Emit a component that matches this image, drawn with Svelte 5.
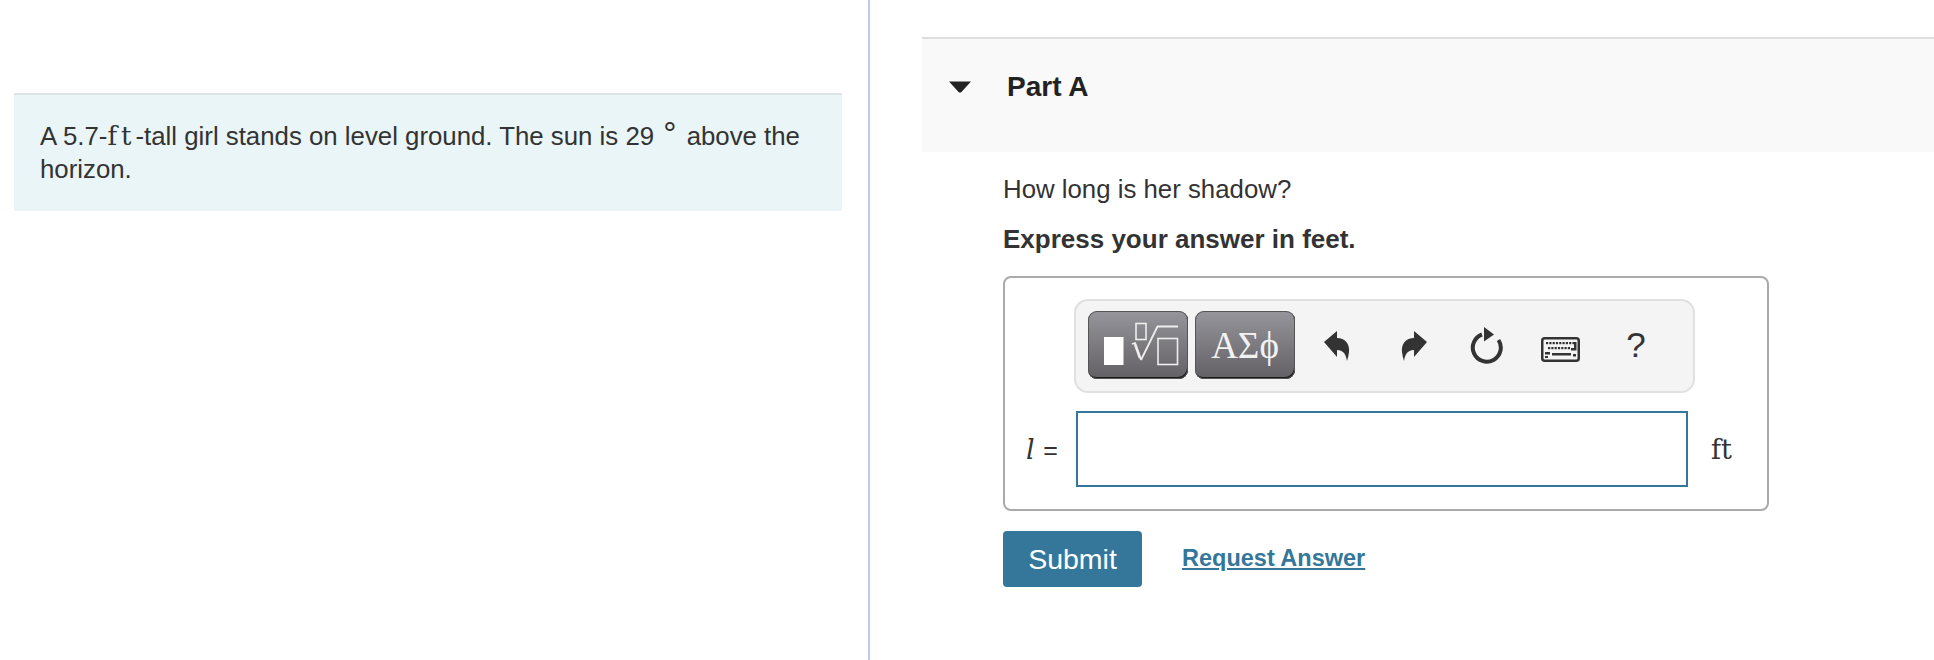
<script>
	const keys = [0, 1, 2, 3, 4, 5, 6, 7, 8];
</script>

<div class="page">
	<section class="left">
		<div class="intro">
			<p>A 5.7-<span class="unit">ft</span>-tall girl stands on level ground. The sun is 29 <span class="deg">°</span> above the horizon.</p>
		</div>
	</section>

	<section class="right">
		<header class="part-head">
			<svg class="caret" viewBox="0 0 22 12" width="22" height="12"><path d="M0 0.5h22L12 11.5h-2z" fill="#222" /></svg>
			<h2>Part A</h2>
		</header>

		<div class="body">
			<p class="question">How long is her shadow?</p>
			<p class="instr">Express your answer in feet.</p>

			<div class="answer-box">
				<div class="toolbar">
					<button class="tpl" aria-label="templates">
						<svg viewBox="0 0 100 68" width="100" height="68" fill="none" stroke="#eee" stroke-width="1.6">
							<rect x="16" y="26" width="19.500" height="28" fill="#fff" stroke="none" />
							<rect x="48" y="12.500" width="10" height="16" />
							<path d="M44 33l3-1 6 17" />
							<path d="M53 49L69.500 15.500H90" stroke-width="1.800" />
							<path d="M52 47l-5-14" stroke-width="2.600" />
							<rect x="70" y="27.500" width="19.500" height="26" />
						</svg>
					</button>
					<button class="tpl greek">ΑΣϕ</button>

					<span class="tool undo">
						<svg viewBox="0 0 28 32" width="28" height="32"><path d="M1 12L14 1v7c8 0 13 6 12 14-.3 3-1 6-2 9-1-6-3-11-10-11v7z" fill="#333" /></svg>
					</span>
					<span class="tool redo">
						<svg viewBox="0 0 28 32" width="28" height="32"><path d="M27 12L14 1v7C6 8 1 14 2 22c.3 3 1 6 2 9 1-6 3-11 10-11v7z" fill="#333" /></svg>
					</span>
					<span class="tool reload">
						<svg viewBox="0 0 34 38" width="34" height="38" fill="none"><path d="M13 8.500A14 14 0 1 0 29.500 14" stroke="#333" stroke-width="4" /><path d="M15 1l10 7.500-10 7z" fill="#333" /></svg>
					</span>
					<span class="tool kbd">
						<svg viewBox="0 0 39 25" width="39" height="25" fill="none">
							<rect x="1.250" y="1.250" width="36.500" height="22.500" rx="2.500" stroke="#333" stroke-width="2.500" />
							{#each keys as k}
								<rect x={5 + k * 3.3} y="5" width="2.200" height="2.200" fill="#333" />
							{/each}
							{#each keys.slice(0, 7) as k}
								<rect x={7 + k * 3.3} y="10" width="2.200" height="2.200" fill="#333" />
							{/each}
							<path d="M33 5h2.500v8.500H30v-2.500h3z" fill="#333" />
							<rect x="4" y="15" width="5" height="2.500" fill="#333" />
							<rect x="11" y="16" width="19" height="2.500" fill="#333" />
							<rect x="4" y="19" width="3" height="2" fill="#333" />
							<rect x="32" y="17" width="3" height="2.500" fill="#333" />
						</svg>
					</span>
					<span class="tool help">?</span>
				</div>

				<div class="entry">
					<span class="lhs"><i>l</i> <span class="eq">=</span></span>
					<input type="text" aria-label="answer" />
					<span class="unit-after">ft</span>
				</div>
			</div>

			<div class="actions">
				<button class="submit">Submit</button>
				<a class="request" href="#answer">Request Answer</a>
			</div>
		</div>
	</section>
</div>

<style>
	:global(body) {
		margin: 0;
		background: #fff;
		font-family: "Liberation Sans", Arial, sans-serif;
		color: #333;
	}

	.page {
		display: flex;
		height: 660px;
		overflow: hidden;
	}

	.left {
		box-sizing: border-box;
		width: 870px;
		flex: none;
		padding: 93px 26px 0 14px;
		border-right: 2px solid #b9cbe6;
	}

	.intro {
		box-sizing: border-box;
		height: 118px;
		padding: 25px 26px 0;
		background: #e9f5f7;
		border-top: 2px solid #dfe3e3;
	}

	.intro p {
		margin: 0;
		font-size: 25.8px;
		line-height: 33px;
	}

	.unit {
		font-family: "DejaVu Serif", serif;
		font-size: 26px;
		letter-spacing: 4px;
		line-height: 0;
	}

	.deg {
		font-size: 33px;
		position: relative;
		top: 0;
		margin: 0 3px 0 2px;
		line-height: 0;
	}

	.right {
		flex: 1;
		padding: 37px 0 0 52px;
		min-width: 0;
	}

	.part-head {
		display: flex;
		align-items: flex-start;
		box-sizing: border-box;
		height: 115px;
		padding: 33px 0 0 27px;
		background: #f9f9f9;
		border-top: 2px solid #dedede;
	}

	.caret {
		margin-top: 9px;
	}

	.part-head h2 {
		margin: 0 0 0 36px;
		font-size: 28px;
		line-height: 29px;
		font-weight: 700;
		color: #222;
	}

	.body {
		padding: 21px 0 0 81px;
	}

	.question,
	.instr {
		margin: 0;
		font-size: 25.8px;
		line-height: 33px;
	}

	.instr {
		margin-top: 17px;
		font-size: 26px;
		font-weight: 700;
	}

	.answer-box {
		box-sizing: border-box;
		width: 766px;
		height: 235px;
		margin-top: 20px;
		padding: 21px 0 0 69px;
		border: 2px solid #aaa;
		border-radius: 8px;
	}

	.toolbar {
		box-sizing: border-box;
		display: flex;
		align-items: center;
		width: 621px;
		height: 94px;
		padding: 0 0 2px 12px;
		background: #f4f4f4;
		border: 2px solid #e0e0e0;
		border-radius: 14px;
	}

	.tpl {
		box-sizing: border-box;
		width: 100px;
		height: 68px;
		margin-right: 7px;
		padding: 0;
		border: none;
		border-radius: 9px;
		background: linear-gradient(#96959b, #626064);
		box-shadow: inset 0 0 0 1px #555, inset -1px -2px 0 #1c1c1c;
		color: #f2f2f2;
		display: flex;
		align-items: center;
		justify-content: center;
	}

	.greek {
		font-family: "Liberation Serif", serif;
		font-size: 37px;
		margin-right: 0;
	}

	.tool {
		flex: none;
		display: flex;
		align-items: center;
		justify-content: center;
		height: 60px;
	}

	.undo {
		width: 28px;
		margin-left: 28px;
		padding-top: 1px;
	}

	.redo {
		width: 28px;
		margin-left: 49px;
		padding-top: 1px;
	}

	.reload {
		width: 34px;
		margin-left: 41px;
	}

	.kbd {
		width: 39px;
		margin-left: 38px;
		padding-top: 8px;
	}

	.help {
		width: 20px;
		margin-left: 46px;
		font-size: 35px;
		color: #333;
	}

	.entry {
		display: flex;
		align-items: center;
		margin-top: 18px;
		margin-left: -69px;
	}

	.lhs {
		width: 71px;
		box-sizing: border-box;
		padding-left: 21px;
		font-family: "DejaVu Serif", serif;
		font-size: 27px;
		white-space: nowrap;
	}

	.lhs .eq {
		font-family: "Liberation Sans", sans-serif;
		font-size: 25px;
	}

	input {
		box-sizing: border-box;
		width: 612px;
		height: 76px;
		margin: 0;
		padding: 0;
		background: #fff;
		border: 2px solid #35779a;
		border-radius: 0;
		outline: none;
	}

	.unit-after {
		margin-left: 23px;
		font-family: "DejaVu Serif", serif;
		font-size: 27px;
	}

	.actions {
		display: flex;
		align-items: center;
		margin-top: 20px;
	}

	.submit {
		width: 139px;
		height: 56px;
		padding: 0;
		border: none;
		border-radius: 4px;
		background: #35779a;
		color: #fff;
		font-family: inherit;
		font-size: 28.500px;
	}

	.request {
		margin-left: 40px;
		margin-bottom: 2px;
		font-size: 23.500px;
		font-weight: 700;
		color: #35779a;
		text-decoration: underline;
	}
</style>
